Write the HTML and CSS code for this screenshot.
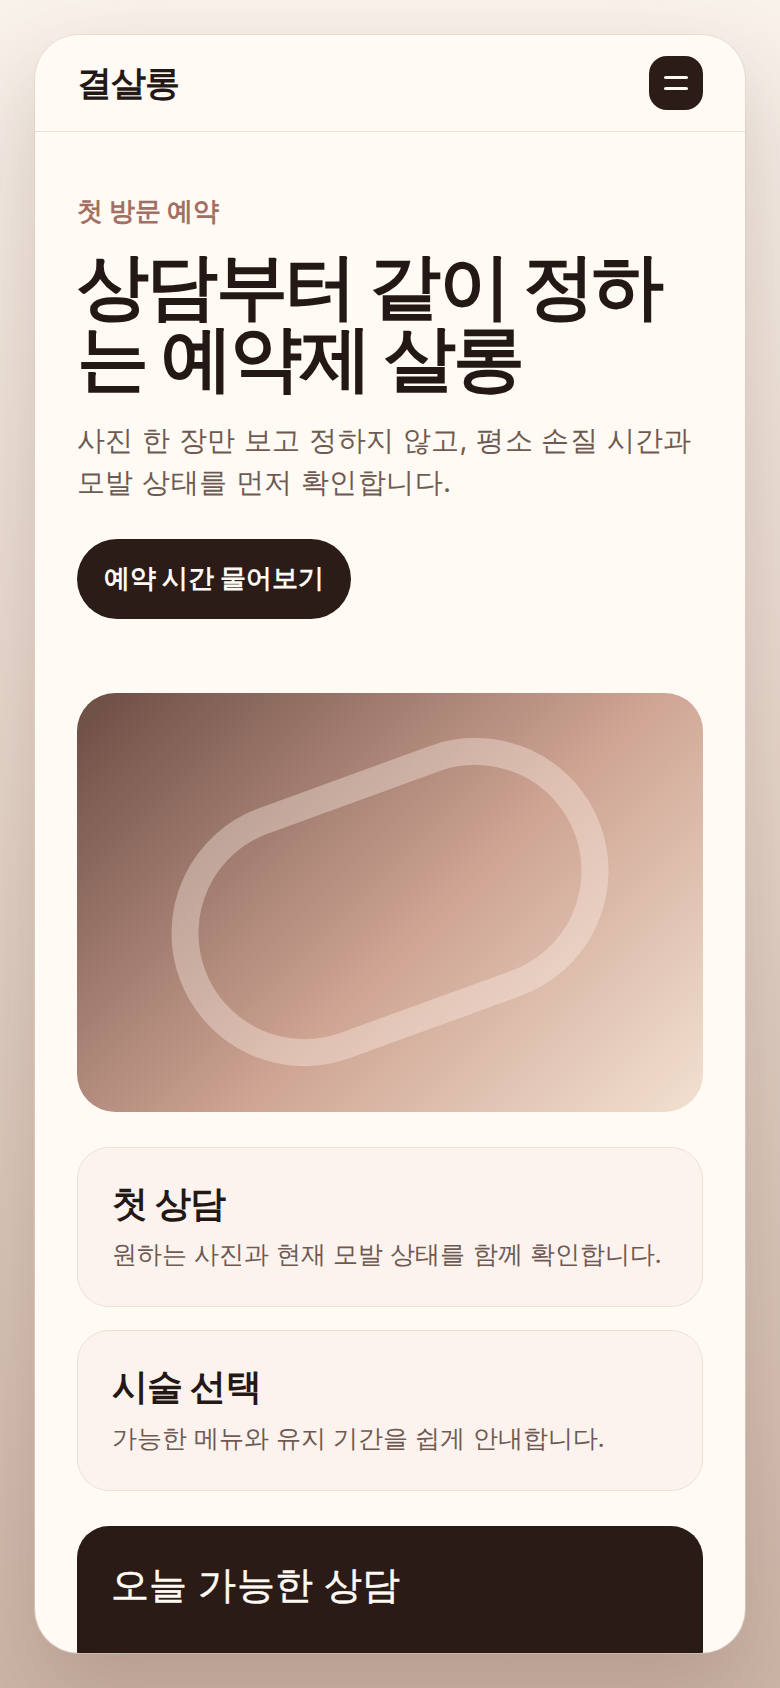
FILE: index.html
```html
<!DOCTYPE html>
<html lang="ko">
<head>
  <meta charset="UTF-8">
  <title>결살롱 - 첫 방문 예약</title>
  <meta name="viewport" content="width=device-width, initial-scale=1">
  <link rel="stylesheet" href="styles.css">
</head>
<body>

  <div class="phone">
    <header class="topbar">
      <a class="logo" href="#">결살롱</a>
      <button class="menu-btn" type="button" aria-label="메뉴 열기">
        <span></span>
        <span></span>
      </button>
    </header>

    <main class="screen">
      <section class="hero">
        <p class="eyebrow">첫 방문 예약</p>
        <h1>상담부터 같이 정하는 예약제 살롱</h1>
        <p class="lead">사진 한 장만 보고 정하지 않고, 평소 손질 시간과 모발 상태를 먼저 확인합니다.</p>
        <a class="cta" href="#">예약 시간 물어보기</a>
      </section>

      <div class="hero-art" aria-hidden="true">
        <div class="ring"></div>
      </div>

      <section class="steps">
        <article class="step">
          <h2>첫 상담</h2>
          <p>원하는 사진과 현재 모발 상태를 함께 확인합니다.</p>
        </article>
        <article class="step">
          <h2>시술 선택</h2>
          <p>가능한 메뉴와 유지 기간을 쉽게 안내합니다.</p>
        </article>
      </section>

      <section class="today">
        <h2>오늘 가능한 상담</h2>
      </section>
    </main>
  </div>

</body>
</html>
```

FILE: styles.css
```css
* { box-sizing: border-box; }
html, body { margin: 0; }
body {
  font-family: Inter, sans-serif;
  color: #231815;
  padding: 35px;
  min-height: 100vh;
  background: linear-gradient(180deg, #f9f2eb 0%, #e6d6cb 45%, #cdb6a8 100%);
}

.phone {
  height: 1618px;
  background: #fffaf4;
  border-radius: 44px;
  overflow: hidden;
  box-shadow: 0 40px 90px rgba(92, 60, 44, 0.22), 0 0 0 1px rgba(236, 222, 212, 0.7);
}

.topbar {
  display: flex;
  align-items: center;
  justify-content: space-between;
  padding: 21px 42px;
  border-bottom: 1px solid #ecdfd6;
}
.logo {
  font-size: 35px;
  font-weight: 700;
  letter-spacing: -0.03em;
  color: #231815;
  text-decoration: none;
}
.menu-btn {
  width: 54px;
  height: 54px;
  border: none;
  border-radius: 18px;
  background: #2b1c18;
  display: flex;
  flex-direction: column;
  align-items: center;
  justify-content: center;
  gap: 8px;
  padding: 0;
  cursor: pointer;
}
.menu-btn span {
  display: block;
  width: 24px;
  height: 3px;
  border-radius: 2px;
  background: #fffaf4;
}

.screen {
  padding: 62px 42px 0;
  display: flex;
  flex-direction: column;
}

.hero { display: flex; flex-direction: column; align-items: flex-start; }
.eyebrow {
  margin: 0;
  font-size: 26px;
  line-height: 1.3;
  font-weight: 600;
  letter-spacing: -0.01em;
  color: #a27063;
}
.hero h1 {
  margin: 21px 0 0;
  font-size: 72px;
  line-height: 1;
  font-weight: 700;
  letter-spacing: -0.035em;
  color: #231815;
}
.lead {
  margin: 26px 0 0;
  font-size: 28px;
  line-height: 1.5;
  letter-spacing: 0.015em;
  color: #6e5a53;
}
.cta {
  margin-top: 36px;
  display: inline-flex;
  align-items: center;
  height: 80px;
  padding: 0 27px;
  border-radius: 40px;
  background: #2b1c18;
  color: #fffaf4;
  font-size: 25.5px;
  font-weight: 700;
  text-decoration: none;
}

.hero-art {
  position: relative;
  margin-top: 74px;
  height: 419px;
  border-radius: 38px;
  overflow: hidden;
  background: linear-gradient(135deg, #6b4c43 0%, #cfa594 56%, #f2e1d1 100%);
}
.ring {
  position: absolute;
  left: 50%;
  top: 50%;
  width: 448px;
  height: 266px;
  border: 27px solid rgba(255, 243, 236, 0.36);
  border-radius: 999px;
  transform: translate(-50%, -50%) rotate(-20deg);
}

.steps {
  margin-top: 35px;
  display: flex;
  flex-direction: column;
  gap: 23px;
}
.step {
  background: #fdf3ee;
  border: 1px solid #eee0d7;
  border-radius: 32px;
  padding: 34px 34px 32px;
}
.step h2 {
  margin: 0 0 10px;
  font-size: 36px;
  line-height: 1.2;
  font-weight: 700;
  letter-spacing: -0.02em;
}
.step p {
  margin: 0;
  font-size: 25.25px;
  line-height: 1.56;
  color: #6e5a53;
}

.today {
  margin-top: 35px;
  background: #2a1b17;
  color: #fffaf4;
  border-radius: 32px;
  padding: 36px 34px 120px;
}
.today h2 {
  margin: 0;
  font-size: 38px;
  line-height: 1.2;
  font-weight: 500;
  letter-spacing: 0.01em;
  -webkit-text-stroke: 0.5px currentColor;
}
```
